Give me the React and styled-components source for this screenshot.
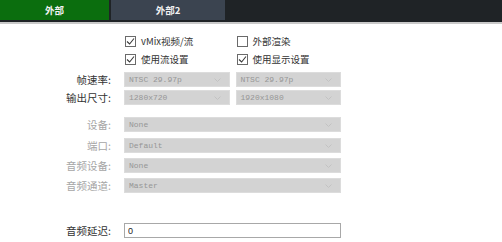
import React from "react";
import styled, { createGlobalStyle } from "styled-components";

const GlobalStyle = createGlobalStyle`
  html, body {
    margin: 0;
    padding: 0;
    background: #ffffff;
    font-family: "Noto Sans CJK SC", "Noto Sans", sans-serif;
  }
`;

const Check = ({ checked, label }) => (
  <CheckRow>
    <Box>
      {checked && (
        <svg width="9" height="9" viewBox="0 0 9 9">
          <path d="M1 4.5 L3.6 7 L8 1.5" fill="none" stroke="#3a3a3a" strokeWidth="1.1" />
        </svg>
      )}
    </Box>
    <span>{label}</span>
  </CheckRow>
);

const Select = ({ value }) => (
  <SelectBox>
    <span>{value}</span>
    <svg width="7" height="4" viewBox="0 0 7 4">
      <path d="M0.5 0.5 L3.5 3.5 L6.5 0.5" fill="none" stroke="#c2c2c2" strokeWidth="1" />
    </svg>
  </SelectBox>
);

const App = () => {
  return (
    <Wrapper>
      <GlobalStyle />
      <TabBar>
        <Tab $active>外部</Tab>
        <Tab>外部2</Tab>
      </TabBar>
      <Form>
        <Row $top={10}>
          <Label />
          <Pair>
            <Check checked label="vMix视频/流" />
            <Check label="外部渲染" />
          </Pair>
        </Row>
        <Row $top={3}>
          <Label />
          <Pair>
            <Check checked label="使用流设置" />
            <Check checked label="使用显示设置" />
          </Pair>
        </Row>
        <Row $top={5}>
          <Label>帧速率:</Label>
          <Pair>
            <Select value="NTSC 29.97p" />
            <Select value="NTSC 29.97p" />
          </Pair>
        </Row>
        <Row $top={3}>
          <Label>输出尺寸:</Label>
          <Pair>
            <Select value="1280x720" />
            <Select value="1920x1080" />
          </Pair>
        </Row>
        <Row $top={12}>
          <Label $muted>设备:</Label>
          <Select value="None" />
        </Row>
        <Row $top={6}>
          <Label $muted>端口:</Label>
          <Select value="Default" />
        </Row>
        <Row $top={5}>
          <Label $muted>音频设备:</Label>
          <Select value="None" />
        </Row>
        <Row $top={5}>
          <Label $muted>音频通道:</Label>
          <Select value="Master" />
        </Row>
        <Row $top={30}>
          <Label>音频延迟:</Label>
          <Input defaultValue="0" />
        </Row>
      </Form>
    </Wrapper>
  );
};

const Wrapper = styled.div`
  width: 502px;
  height: 242px;
  overflow: hidden;
  background: #ffffff;
`;

const TabBar = styled.div`
  height: 22px;
  background: #1f2326;
  display: flex;
  gap: 2px;
  border-bottom: 2px solid #c9c9c9;
`;

const Tab = styled.div`
  width: ${(p) => (p.$active ? "109px" : "114px")};
  height: 20px;
  display: flex;
  align-items: center;
  justify-content: center;
  background: ${(p) => (p.$active ? "#0b6e0e" : "#3b4450")};
  color: #f2f2f2;
  font-size: 9.5px;
  font-weight: 700;
`;

const Form = styled.div`
  display: flex;
  flex-direction: column;
`;

const Row = styled.div`
  display: grid;
  grid-template-columns: 111px 217px;
  column-gap: 13px;
  align-items: center;
  margin-top: ${(p) => p.$top}px;
  height: 15px;
`;

const Label = styled.div`
  text-align: right;
  font-size: 10.5px;
  color: ${(p) => (p.$muted ? "#a6a6a6" : "#333333")};
  line-height: 15px;
  height: 15px;
  white-space: nowrap;
`;

const Pair = styled.div`
  display: grid;
  grid-template-columns: 1fr 1fr;
  column-gap: 6px;
  height: 15px;
  align-items: center;
`;

const CheckRow = styled.div`
  display: flex;
  align-items: center;
  gap: 5px;
  height: 15px;
  font-size: 9.5px;
  color: #333333;
  line-height: 15px;
  padding-left: 1px;
  white-space: nowrap;
`;

const Box = styled.div`
  width: 9px;
  height: 9px;
  border: 1px solid #6a6a6a;
  display: flex;
  align-items: center;
  justify-content: center;
  background: #ffffff;
`;

const SelectBox = styled.div`
  height: 15px;
  background: #d3d3d3;
  border: 1px solid #dcdcdc;
  box-sizing: border-box;
  display: flex;
  align-items: center;
  justify-content: space-between;
  padding: 0 8px 0 4px;
  font-family: "Liberation Mono", "DejaVu Sans Mono", monospace;
  font-size: 8px;
  color: #969696;
`;

const Input = styled.input`
  height: 15px;
  box-sizing: border-box;
  border: 1px solid #a8a8a8;
  background: #ffffff;
  padding: 0 3px;
  font-family: "Liberation Sans", sans-serif;
  font-size: 9px;
  color: #222222;
  outline: none;
`;

export default App;
